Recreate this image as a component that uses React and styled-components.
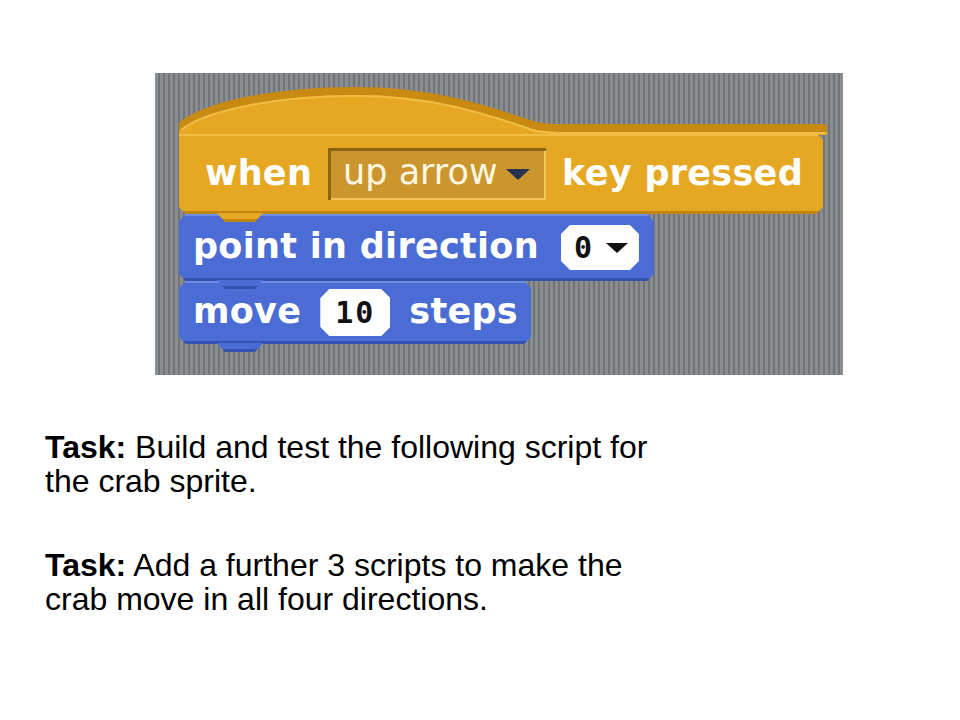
import React from 'react';
import styled, { createGlobalStyle } from 'styled-components';

const GlobalStyle = createGlobalStyle`
  html, body {
    margin: 0;
    padding: 0;
    background: #fff;
  }
`;

const Page = styled.div`
  width: 960px;
  height: 720px;
  padding-top: 73px;
  box-sizing: border-box;
  background: #fff;
  overflow: hidden;
`;

const ScriptArea = styled.div`
  margin-left: 155px;
  width: 688px;
  height: 302px;
  padding: 10px 0 0 24px;
  box-sizing: border-box;
  background: repeating-linear-gradient(90deg, #8b8e91 0 3px, #727578 3px 5px);
  display: flex;
  flex-direction: column;
  align-items: flex-start;
`;

const BlockWrap = styled.div`
  position: relative;
  z-index: ${p => p.layer};
  display: flex;
  flex-direction: column;
`;

const HatCap = styled.svg`
  display: block;
  margin-bottom: -1px;
`;

const Body = styled.div`
  width: ${p => p.w}px;
  height: ${p => p.h}px;
  display: flex;
  align-items: center;
  gap: ${p => p.gap || 20}px;
  padding-left: ${p => p.pad}px;
  box-sizing: border-box;
  background: ${p => p.fill};
  box-shadow: inset 0 2px 0 ${p => p.light}, inset 0 -3px 0 ${p => p.dark};
  clip-path: ${p => p.hat
    ? 'polygon(0 0, calc(100% - 6px) 0, 100% 6px, 100% calc(100% - 7px), calc(100% - 7px) 100%, 7px 100%, 0 calc(100% - 7px))'
    : 'polygon(7px 0, calc(100% - 7px) 0, 100% 7px, 100% calc(100% - 7px), calc(100% - 7px) 100%, 7px 100%, 0 calc(100% - 7px), 0 7px)'};
`;

const Tab = styled.div`
  position: absolute;
  left: 38px;
  top: 100%;
  width: 46px;
  height: 9px;
  margin-top: -1px;
  background: linear-gradient(${p => p.fill} 0 6px, ${p => p.dark} 6px);
  clip-path: polygon(0 0, 100% 0, calc(100% - 8px) 100%, 8px 100%);
`;

const Label = styled.span`
  font-family: "DejaVu Sans", Verdana, sans-serif;
  font-weight: bold;
  font-size: 35px;
  line-height: 1;
  color: #fff;
  white-space: nowrap;
  letter-spacing: 0.3px;
  padding-bottom: 2px;
`;

const DropField = styled.div`
  width: 218px;
  height: 52px;
  display: flex;
  align-items: center;
  gap: 8px;
  padding: 0 12px 0 15px;
  box-sizing: border-box;
  background: #ca962d;
  box-shadow: inset 3px 3px 0 #8a6313, inset -2px -2px 0 #f3c457;
  color: #fff7e2;
  font-family: "DejaVu Sans", Verdana, sans-serif;
  font-size: 35px;
  line-height: 1;
  white-space: nowrap;
  & > span:first-child {
    padding-bottom: 4px;
  }
`;

const Arrow = styled.span`
  width: 0;
  height: 0;
  border-left: ${p => p.size / 2}px solid transparent;
  border-right: ${p => p.size / 2}px solid transparent;
  border-top: ${p => Math.round(p.size * 0.45)}px solid ${p => p.color};
`;

const NumField = styled.div`
  width: ${p => p.w}px;
  height: ${p => p.h}px;
  display: flex;
  align-items: center;
  justify-content: ${p => p.dropdown ? 'flex-start' : 'center'};
  gap: 12px;
  padding-left: ${p => p.dropdown ? 13 : 0}px;
  box-sizing: border-box;
  background: #fff;
  clip-path: polygon(9px 0, calc(100% - 9px) 0, 100% 9px, 100% calc(100% - 9px), calc(100% - 9px) 100%, 9px 100%, 0 calc(100% - 9px), 0 9px);
  font-family: "DejaVu Sans Mono", monospace;
  font-weight: bold;
  font-size: 30px;
  line-height: 1;
  letter-spacing: 2px;
  color: #111;
`;

const Notes = styled.div`
  margin: 55px 0 0 45px;
  font-family: "Liberation Sans", Arial, sans-serif;
  font-size: 32px;
  line-height: 34px;
  color: #000;
`;

const Para = styled.p`
  margin: 0 0 50px;
  white-space: nowrap;
`;

const YELLOW = { fill: '#e6a822', light: '#f2bd45', dark: '#c38512' };
const BLUE = { fill: '#4a6cd4', light: '#6d8de6', dark: '#3552ae' };

function HatTop() {
  return (
    <HatCap width="648" height="52" viewBox="0 0 648 52">
      <path
        d="M0,52 L0,40 C22,20 92,4 176,4 C250,4 300,20 345,35 Q360,41 380,41 L644,41 Q648,41 648,45 L648,52 Z"
        fill="#c98a12"
      />
      <path
        d="M0,52 L0,48 C22,29 92,12 176,12 C250,12 300,28 345,43 Q358,49 380,49 L648,49 L648,52 Z"
        fill="#e6a822"
      />
      <path
        d="M2,47 C24,29 92,13 176,13 C250,13 300,29 345,44 Q358,50 380,50 L646,50"
        fill="none"
        stroke="#f2bd45"
        strokeWidth="2"
      />
    </HatCap>
  );
}

export default function App() {
  return (
    <>
      <GlobalStyle />
      <Page>
        <ScriptArea>
          <BlockWrap layer={3}>
            <HatTop />
            <Body hat w={644} h={80} pad={26} gap={16} {...YELLOW}>
              <Label>when</Label>
              <DropField>
                <span>up arrow</span>
                <Arrow size={25} color="#26304f" />
              </DropField>
              <Label>key pressed</Label>
            </Body>
            <Tab fill={YELLOW.fill} dark={YELLOW.dark} />
          </BlockWrap>

          <BlockWrap layer={2}>
            <Body w={475} h={67} pad={14} gap={22} {...BLUE}>
              <Label>point in direction</Label>
              <NumField dropdown w={78} h={45}>
                <span>0</span>
                <Arrow size={22} color="#111" />
              </NumField>
            </Body>
            <Tab fill={BLUE.fill} dark={BLUE.dark} />
          </BlockWrap>

          <BlockWrap layer={1}>
            <Body w={352} h={63} pad={14} gap={19} {...BLUE}>
              <Label>move</Label>
              <NumField w={70} h={47}>10</NumField>
              <Label>steps</Label>
            </Body>
            <Tab fill={BLUE.fill} dark={BLUE.dark} />
          </BlockWrap>
        </ScriptArea>

        <Notes>
          <Para>
            <b>Task:</b> Build and test the following script for
            <br />
            the crab sprite.
          </Para>
          <Para>
            <b>Task:</b> Add a further 3 scripts to make the
            <br />
            crab move in all four directions.
          </Para>
        </Notes>
      </Page>
    </>
  );
}
